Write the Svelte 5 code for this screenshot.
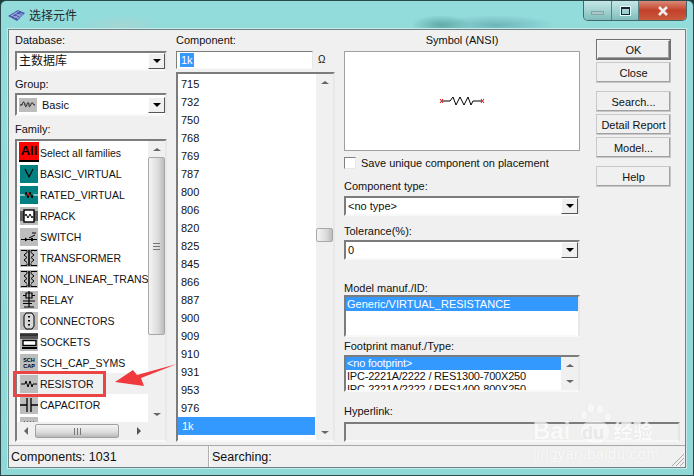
<script>
  const families = [
    { name: "Select all families", icon: "all" },
    { name: "BASIC_VIRTUAL", icon: "basic" },
    { name: "RATED_VIRTUAL", icon: "rated" },
    { name: "RPACK", icon: "rpack" },
    { name: "SWITCH", icon: "switch" },
    { name: "TRANSFORMER", icon: "transformer" },
    { name: "NON_LINEAR_TRANSF", icon: "transformer" },
    { name: "RELAY", icon: "relay" },
    { name: "CONNECTORS", icon: "connectors" },
    { name: "SOCKETS", icon: "sockets" },
    { name: "SCH_CAP_SYMS", icon: "sch" },
    { name: "RESISTOR", icon: "resistor", active: true },
    { name: "CAPACITOR", icon: "capacitor" },
    { name: "INDUCTOR", icon: "inductor" },
  ];
  const values = ["715","732","750","768","769","787","800","806","820","825","845","866","887","900","909","910","931","953","976","1k","1.02k"];
  const buttons = [["OK", "Close"], ["Search...", "Detail Report", "Model..."], ["Help"]];
</script>

{#snippet arrow(dir)}
  <span class="arrow {dir}"></span>
{/snippet}

{#snippet combo(text, icon)}
  <div class="combo">
    {#if icon}
      <svg class="group-icon" viewBox="0 0 18 14" width="18" height="14">
        <rect width="18" height="14" fill="#bdbdbd" />
        <path d="M1 7h2c1-4 2-4 3 0s2 0 2-1 2-3 2 1 2 0 2-1 2-2 3 1h1" fill="none" stroke="#111" stroke-width="1" />
      </svg>
    {/if}
    <span class="combo-text">{text}</span>
    <span class="combo-btn">{@render arrow("down")}</span>
  </div>
{/snippet}

{#snippet famIcon(kind)}
  {#if kind === "all"}
    <span class="all-icon">All</span>
  {:else}
    <svg class="fam-icon" viewBox="0 0 18 18" width="18" height="18">
      <rect width="18" height="18" fill={kind === "basic" || kind === "rated" ? "#008080" : "#bdbdbd"} />
      <g fill="none" stroke="#000" stroke-width="1">
        {#if kind === "basic"}
          <path d="M5 4l4 8 4-8" stroke-width="1.2" />
        {:else if kind === "rated"}
          <path d="M0 9h5M13 9h5" stroke="#fff" />
          <path d="M5 9l1-3 2 6 2-6 2 6 1-3" />
          <path d="M8 7l2 4" stroke="#e01010" stroke-width="1.4" />
        {:else if kind === "rpack"}
          <rect x="4" y="3" width="10" height="12" fill="#fff" stroke-width="1.4" />
          <path d="M0 5h4M0 7h4M0 9h4M0 11h4M0 13h4M14 5h4M14 7h4M14 9h4M14 11h4M14 13h4" stroke-width="1.1" />
          <path d="M5 9l1-2 2 4 2-4 2 4 1-2" />
        {:else if kind === "switch"}
          <path d="M1 11.5h16M9 10l6-3M12 5h4" />
          <path d="M5 9.5l3 2-3 2zM11 10h2v3h-2z" fill="#000" stroke="none" />
        {:else if kind === "transformer"}
          <path d="M1 1.5h6v2M1 16.5h6v-2M17 1.5h-6v2M17 16.5h-6v-2" />
          <path d="M7 3.5L4 6l3 2.5L4 11l3 2.5M11 3.5L14 6l-3 2.5 3 2.5-3 2.5" />
          <path d="M8.5 1v16M9.5 1v16" stroke-width=".8" />
        {:else if kind === "relay"}
          <path d="M6 2h6v5H6zM3 4.5h3M12 4.5h3M3 10h12M3 12.5h9M9 0v16M4 16h10" stroke-width="1.2" />
        {:else if kind === "connectors"}
          <path d="M6 1h6l2 3v10l-2 3H6l-2-3V4z" fill="#d8d8d8" />
          <path d="M9 4v1.5M9 8v1.5M9 12v1.5" stroke-width="2" />
        {:else if kind === "sockets"}
          <path d="M1 0v6M3 0v6M5 0v6M7 0v6M9 0v6M11 0v6M13 0v6M15 0v6M17 0v6" stroke-width="1.1" />
          <path d="M0 2h18" stroke="#000" stroke-width=".8" />
          <rect x="3" y="7.5" width="13" height="5" fill="#fff" stroke-width="1.4" />
          <path d="M2 15h15" stroke-width="2" />
        {:else if kind === "sch"}
          <text class="tiny" x="9" y="8" text-anchor="middle">SCH</text>
          <text class="tiny" x="9" y="14" text-anchor="middle">CAP</text>
        {:else if kind === "resistor"}
          <path d="M1 9h4l1-3 2 6 2-6 2 6 1-3h4" />
        {:else if kind === "capacitor"}
          <path d="M0 9h7M11 9h7M7 2v14M11 2v14" stroke-width="1.3" />
        {:else}
          <path d="M0 8h3c0-4 3-4 3 0 0-4 3-4 3 0 0-4 3-4 3 0 0-4 3-4 3 0h3" />
        {/if}
      </g>
    </svg>
  {/if}
{/snippet}

<div class="window">
  <header class="titlebar">
    <svg class="app-icon" viewBox="0 0 17 11" width="17" height="11">
      <path d="M0 6l10-6 7 3-8 8z" fill="#4c5ba8" />
      <path d="M3 6l8-5M6 8l8-5M9 9l6-5M3 5l7 3M6 3l7 3" stroke="#b9c4f0" stroke-width=".7" fill="none" />
    </svg>
    <span class="title">选择元件</span>
    <div class="win-btns">
      <span class="wb min"><i></i></span>
      <span class="wb max"><i></i></span>
      <span class="wb close">
        <svg viewBox="0 0 12 10" width="12" height="10"><path d="M2 1l8 8M10 1L2 9" stroke="#eee" stroke-width="2.6" /></svg>
      </span>
    </div>
  </header>

  <div class="client">
    <div class="main">
      <section class="col-left">
        <label class="lbl first">Database:</label>
        {@render combo("主数据库")}
        <label class="lbl group-lbl">Group:</label>
        {@render combo("Basic", true)}
        <label class="lbl family-lbl">Family:</label>
        <div class="family-box sunken">
          <div class="family-top">
            <ul class="family-list">
              {#each families as f}
                <li class:active={f.active}>
                  {@render famIcon(f.icon)}
                  <span class="fam-name">{f.name}</span>
                </li>
              {/each}
            </ul>
            <div class="vscroll">
              <span class="sb-arrow">{@render arrow("up-gray")}</span>
              <div class="track fam-track">
                <div class="thumb fam-thumb"><span class="grip"></span></div>
              </div>
              <span class="sb-arrow">{@render arrow("down-gray")}</span>
            </div>
          </div>
          <div class="hscroll">
            <span class="h-arrow">{@render arrow("left")}</span>
            <div class="hthumb"><span class="hgrip"></span></div>
            <span class="h-arrow">{@render arrow("right")}</span>
          </div>
        </div>
      </section>

      <section class="col-mid">
        <label class="lbl first">Component:</label>
        <div class="search-row">
          <div class="search-input"><span class="sel-text">1k</span></div>
          <span class="ohm">Ω</span>
        </div>
        <div class="value-box sunken">
          <ul class="value-list">
            {#each values as v}
              <li class:selected={v === "1k"}>{v}</li>
            {/each}
          </ul>
          <div class="vscroll">
            <span class="sb-arrow">{@render arrow("up-gray")}</span>
            <div class="track val-track"><div class="thumb val-thumb"></div></div>
            <span class="sb-arrow">{@render arrow("down-gray")}</span>
          </div>
        </div>
      </section>

      <section class="col-right">
        <div class="right-top">
          <div class="form">
            <div class="lbl first center">Symbol (ANSI)</div>
            <div class="symbol">
              <svg viewBox="0 0 46 10" width="46" height="10">
                <path d="M3 5h8l3-4 3 8 4-8 4 8 4-8 3 8 2-4h9" fill="none" stroke="#000" stroke-width="1" />
                <path d="M1 3l3 4M4 3L1 7M42 3l3 4M45 3l-3 4" stroke="#e01010" stroke-width="1" />
              </svg>
            </div>
            <div class="check-row"><span class="check"></span><span>Save unique component on placement</span></div>
            <label class="lbl type-lbl">Component type:</label>
            {@render combo("<no type>")}
            <label class="lbl tol-lbl">Tolerance(%):</label>
            {@render combo("0")}
            <label class="lbl model-lbl">Model manuf./ID:</label>
            <div class="model-box sunken"><div class="row-sel">Generic/VIRTUAL_RESISTANCE</div></div>
            <label class="lbl foot-lbl">Footprint manuf./Type:</label>
            <div class="foot-box sunken">
              <ul class="foot-list">
                <li class="row-sel">&lt;no footprint&gt;</li>
                <li>IPC-2221A/2222 / RES1300-700X250</li>
                <li>IPC-2221A/2222 / RES1400-800X250</li>
              </ul>
              <div class="foot-scroll">
                {@render arrow("up-gray")}
                {@render arrow("down-gray")}
              </div>
            </div>
          </div>
          <div class="buttons">
            {#each buttons as group}
              <div class="btn-group">
                {#each group as b}
                  <button type="button" class:default={b === "OK"}>{b}</button>
                {/each}
              </div>
            {/each}
          </div>
        </div>
        <label class="lbl link-lbl">Hyperlink:</label>
        <div class="link-box"></div>
      </section>
    </div>

    <footer class="status">
      <div class="st st-left">Components: 1031</div>
      <div class="st st-right">Searching:</div>
      <svg class="grip-corner" viewBox="0 0 14 14" width="14" height="14">
        <path d="M13 1L1 13M13 5L5 13M13 9l-4 4" stroke="#a8a8a8" stroke-width="1" />
      </svg>
    </footer>

    <!-- annotation drawn on top of the screenshot -->
    <div class="red-box"></div>
    <svg class="red-arrow" viewBox="0 0 64 24" width="64" height="24">
      <path d="M63 0L27 14l3 8-29-4L19 6l4 5z" fill="#f0393c" />
    </svg>
    <div class="watermark">
      <svg class="paw" viewBox="0 0 34 44" width="34" height="44">
        <g fill="#fff" stroke="#e0e0e0" stroke-width=".6">
          <ellipse cx="5" cy="12" rx="3.6" ry="4.6" />
          <ellipse cx="12" cy="5" rx="3.8" ry="5" />
          <ellipse cx="21" cy="6" rx="3.8" ry="5" />
          <ellipse cx="29" cy="14" rx="3.6" ry="4.6" />
          <ellipse cx="16" cy="29" rx="15" ry="12" />
        </g>
      </svg>
      <div class="wm-main">
        <span class="wm-bai">Bai</span><span class="wm-du">du</span><span class="wm-cn">经验</span>
      </div>
      <div class="wm-sub">jingyan.baidu.com</div>
    </div>
  </div>
</div>

<style>
  :global(body) {
    margin: 0;
    background: #1a3a3c;
  }
  ul {
    list-style: none;
    margin: 0;
    padding: 0;
  }
  .window {
    box-sizing: border-box;
    width: 694px;
    height: 476px;
    display: flex;
    flex-direction: column;
    padding: 0 7px 7px 7px;
    font-family: "Liberation Sans", "Noto Sans CJK SC", sans-serif;
    font-size: 11px;
    line-height: 14px;
    color: #111;
    border: 1px solid #2c4a4c;
    border-radius: 6px 6px 0 0;
    overflow: hidden;
    background:
      radial-gradient(ellipse 30px 10px at 440px 24px, #5fa9a8, transparent),
      radial-gradient(ellipse 60px 10px at 495px 24px, #6eb5b8, transparent),
      radial-gradient(ellipse 40px 10px at 120px 24px, #a3d6d2, transparent),
      linear-gradient(#93dcdc, #8ed8d8);
  }
  .titlebar {
    flex: none;
    height: 28px;
    display: flex;
    align-items: center;
    position: relative;
  }
  .app-icon {
    margin: 0 4px 0 0;
    flex: none;
  }
  .title {
    font-size: 12px;
    color: #1c2a2c;
    margin-top: 1px;
  }
  .win-btns {
    margin-left: auto;
    align-self: flex-start;
    margin-right: -1px;
    display: flex;
    height: 19px;
    border: 1px solid #44676a;
    border-top: 0;
    border-radius: 0 0 5px 5px;
    overflow: hidden;
  }
  .wb {
    display: flex;
    align-items: center;
    justify-content: center;
    height: 100%;
    border-right: 1px solid #5b7f82;
    background: linear-gradient(#c4e6e6, #a4d2d2 50%, #7fbcbc);
  }
  .min { width: 27px; }
  .min i {
    width: 11px;
    height: 2px;
    margin-top: 4px;
    background: #a9c8c8;
    border: 1px solid #84a4a4;
  }
  .max { width: 26px; }
  .max i {
    width: 7px;
    height: 5px;
    border: 1px solid #223;
    border-top-width: 2px;
    outline: 1px solid #dff;
  }
  .close {
    width: 47px;
    border: 0;
    background: linear-gradient(#d88a78, #c4412a 50%, #c85a3c);
  }
  .client {
    flex: 1;
    min-height: 0;
    position: relative;
    display: flex;
    flex-direction: column;
    background: #f0f0f0;
    border: 1px solid #6b8486;
    box-shadow: 0 0 0 1px #c8e8e8;
  }
  .main {
    flex: 1;
    min-height: 0;
    display: flex;
    padding: 0 5px 3px 6px;
    gap: 9px;
  }
  section {
    display: flex;
    flex-direction: column;
    min-height: 0;
  }
  .col-left { width: 152px; flex: none; }
  .col-mid { width: 159px; flex: none; }
  .col-right { flex: 1; min-width: 0; }
  .lbl {
    display: block;
    height: 14px;
  }
  .first { margin-top: 3px; margin-bottom: 4px; }
  .center { text-align: center; }
  .combo {
    box-sizing: border-box;
    height: 20px;
    flex: none;
    display: flex;
    align-items: center;
    background: #fff;
    border: 2px solid;
    border-color: #7c7c7c #e8e8e8 #f8f8f8 #7c7c7c;
  }
  .col-left .combo:nth-of-type(1) { font-size: 12px; }
  .combo-text {
    flex: 1;
    padding-left: 2px;
  }
  .group-icon { margin-left: 2px; margin-right: 3px; }
  .combo-btn {
    width: 17px;
    height: 16px;
    box-sizing: border-box;
    display: flex;
    align-items: center;
    justify-content: center;
    background: #f0f0f0;
    border: 1px solid;
    border-color: #fff #555 #555 #fff;
  }
  .arrow {
    display: block;
    width: 0;
    height: 0;
    border-style: solid;
    border-color: transparent;
  }
  .down { border-width: 4px 4px 0; border-top-color: #000; }
  .down-gray { border-width: 3px 4px 0; border-top-color: #666; }
  .up-gray { border-width: 0 4px 3px; border-bottom-color: #666; }
  .left { border-width: 4px 4px 4px 0; border-right-color: #666; }
  .right { border-width: 4px 0 4px 4px; border-left-color: #555; }

  .group-lbl { margin-top: 6px; margin-bottom: 2px; }
  .col-left .combo:nth-of-type(2) { height: 23px; }
  .family-lbl { margin-top: 6px; margin-bottom: 3px; }
  .sunken {
    box-sizing: border-box;
    background: #fff;
    border: 2px solid;
    border-color: #7c7c7c #e8e8e8 #f8f8f8 #7c7c7c;
  }
  .family-box {
    flex: 1;
    min-height: 0;
    display: flex;
    flex-direction: column;
  }
  .family-top {
    flex: 1;
    min-height: 0;
    display: flex;
  }
  .family-list {
    flex: 1;
    min-width: 0;
    overflow: hidden;
    padding-top: 1px;
    font-size: 10.5px;
  }
  .family-list li {
    height: 21px;
    display: flex;
    align-items: center;
    white-space: nowrap;
    overflow: hidden;
    padding-left: 3px;
  }
  .family-list li.active { background: #f0f0f0; }
  .fam-icon, .all-icon { flex: none; }
  .all-icon {
    box-sizing: border-box;
    width: 20px;
    height: 20px;
    margin-top: -1px;
    margin-left: -1px;
    margin-right: -1px;
    background: #ff0000;
    border-bottom: 2px solid #000;
    color: #000;
    font: bold 13px/17px "Liberation Sans", sans-serif;
    text-align: center;
  }
  .tiny {
    font: bold 5.5px "Liberation Sans", sans-serif;
    fill: #000;
    stroke: none;
  }
  .fam-name { margin-left: 2px; }
  .vscroll {
    width: 17px;
    flex: none;
    display: flex;
    flex-direction: column;
    background: #f0f0f0;
  }
  .sb-arrow {
    height: 16px;
    flex: none;
    display: flex;
    align-items: center;
    justify-content: center;
  }
  .track { flex: 1; min-height: 0; }
  .thumb {
    box-sizing: border-box;
    border: 1px solid #a8a8a8;
    border-radius: 2px;
    background: linear-gradient(90deg, #f4f4f4, #dcdcdc 60%, #bcbcbc);
  }
  .fam-thumb {
    height: 178px;
    display: flex;
    align-items: center;
    justify-content: center;
  }
  .grip {
    width: 7px;
    height: 7px;
    background: repeating-linear-gradient(#777 0 1px, transparent 1px 3px);
  }
  .val-track { padding-top: 138px; }
  .val-thumb { height: 14px; }
  .hscroll {
    height: 18px;
    flex: none;
    display: flex;
    align-items: center;
    background: #f0f0f0;
    padding-right: 17px;
  }
  .h-arrow {
    width: 18px;
    flex: none;
    display: flex;
    justify-content: center;
  }
  .hthumb {
    width: 84px;
    margin-right: auto;
    height: 14px;
    box-sizing: border-box;
    border: 1px solid #a0a0a0;
    border-radius: 2px;
    background: linear-gradient(#f4f4f4, #dcdcdc 60%, #b8b8b8);
    display: flex;
    align-items: center;
    justify-content: center;
  }
  .hgrip {
    width: 7px;
    height: 7px;
    background: repeating-linear-gradient(90deg, #777 0 1px, transparent 1px 3px);
  }

  .search-row {
    display: flex;
    align-items: center;
    height: 18px;
    margin-bottom: 3px;
    flex: none;
  }
  .search-input {
    box-sizing: border-box;
    width: 137px;
    height: 18px;
    background: #fff;
    border: 1px solid;
    border-color: #7c7c7c #e8e8e8 #f8f8f8 #7c7c7c;
    padding: 1px 3px;
    line-height: 14px;
  }
  .sel-text {
    display: inline-block;
    background: #3399ff;
    color: #fff;
    padding: 0 1px;
  }
  .ohm {
    margin-left: 5px;
    font-size: 10px;
  }
  .value-box {
    flex: 1;
    min-height: 0;
    display: flex;
  }
  .value-list {
    flex: 1;
    min-width: 0;
    overflow: hidden;
    padding-top: 1px;
  }
  .value-list li {
    height: 18px;
    line-height: 18px;
    padding-left: 3px;
    margin-right: 1px;
  }
  .value-list li.selected {
    background: #3399ff;
    color: #fff;
    padding-left: 4px;
  }

  .right-top {
    flex: none;
    display: flex;
    gap: 16px;
  }
  .form {
    width: 236px;
    flex: none;
    display: flex;
    flex-direction: column;
  }
  .symbol {
    box-sizing: border-box;
    height: 100px;
    background: #fff;
    border: 1px solid #a0a0a0;
    display: flex;
    align-items: center;
    justify-content: center;
  }
  .check-row {
    display: flex;
    align-items: center;
    gap: 5px;
    height: 14px;
    margin-top: 5px;
  }
  .check {
    box-sizing: border-box;
    width: 12px;
    height: 12px;
    background: #fff;
    border: 1px solid;
    border-color: #808080 #e8e8e8 #e8e8e8 #808080;
  }
  .type-lbl { margin-top: 9px; margin-bottom: 3px; }
  .tol-lbl { margin-top: 8px; margin-bottom: 2px; }
  .model-lbl { margin-top: 21px; margin-bottom: 0; }
  .model-box { height: 42px; }
  .row-sel {
    background: #3399ff;
    color: #fff;
    height: 14px;
    padding-left: 1px;
  }
  .foot-lbl { margin-top: 2px; margin-bottom: 2px; }
  .foot-box {
    height: 37px;
    display: flex;
    overflow: hidden;
  }
  .foot-list {
    flex: 1;
    min-width: 0;
    white-space: nowrap;
    overflow: hidden;
    letter-spacing: -.2px;
  }
  .foot-list li {
    height: 13px;
    line-height: 13px;
    padding-left: 1px;
  }
  .foot-scroll {
    width: 17px;
    flex: none;
    background: #f0f0f0;
    display: flex;
    flex-direction: column;
    align-items: center;
    justify-content: space-around;
  }
  .buttons {
    width: 75px;
    flex: none;
    margin-top: 9px;
    display: flex;
    flex-direction: column;
    gap: 8px;
  }
  .btn-group {
    display: flex;
    flex-direction: column;
    gap: 2px;
  }
  button {
    box-sizing: border-box;
    width: 75px;
    height: 21px;
    padding: 0;
    font: inherit;
    color: #111;
    background: #f0f0f0;
    border: 1px solid;
    border-color: #fff #808080 #808080 #fff;
    box-shadow: inset -1px -1px 0 #a0a0a0;
    outline: 1px solid #c8c8c8;
    outline-offset: -1px;
  }
  button.default {
    border: 2px solid;
    border-color: #f8f8f8 #707070 #707070 #f8f8f8;
    outline: 1px solid #707070;
    outline-offset: -1px;
  }
  .link-lbl { margin-top: 12px; margin-bottom: 4px; }
  .link-box {
    box-sizing: border-box;
    height: 21px;
    border: 2px solid;
    border-color: #7c7c7c #e4e4e4 #f8f8f8 #7c7c7c;
    background: #f0f0f0;
  }
  .status {
    flex: none;
    height: 22px;
    display: flex;
    position: relative;
    border-top: 1px solid #a8a8a8;
    box-sizing: border-box;
    font-size: 12.5px;
  }
  .st {
    padding: 3px 0 0 2px;
    line-height: 16px;
  }
  .st-left {
    width: 197px;
    border-right: 1px solid #b0b0b0;
  }
  .st-right { flex: 1; padding-left: 2px; border-left: 1px solid #fff; }
  .grip-corner {
    position: absolute;
    right: 0;
    bottom: 0;
  }
  .red-box {
    position: absolute;
    left: 4px;
    top: 341px;
    box-sizing: border-box;
    width: 93px;
    height: 26px;
    border: 3px solid #ea4444;
    pointer-events: none;
  }
  .red-arrow {
    position: absolute;
    left: 105px;
    top: 334px;
  }
  .watermark {
    position: absolute;
    left: 524px;
    top: 391px;
    width: 125px;
    color: #fff;
    pointer-events: none;
    opacity: .7;
  }
  .paw {
    position: absolute;
    left: 46px;
    top: -18px;
    opacity: .75;
  }
  .wm-main {
    position: relative;
    display: flex;
    align-items: baseline;
    white-space: nowrap;
    height: 20px;
    line-height: 20px;
  }
  .wm-bai {
    font: bold 24px/20px "Liberation Sans", sans-serif;
    width: 49px;
    text-shadow: 0 0 1px #d4d4d4;
  }
  .wm-du {
    font: bold 18px/20px "Liberation Sans", sans-serif;
    color: #e6e6e6;
    width: 31px;
  }
  .wm-cn {
    font: bold 20px/20px "Noto Sans CJK SC", sans-serif;
    text-shadow: 0 0 1px #d4d4d4;
  }
  .wm-sub {
    position: relative;
    margin-top: 6px;
    font: 15px/14px "Liberation Sans", sans-serif;
    letter-spacing: .3px;
    text-shadow: 0 0 1px #d4d4d4;
    white-space: nowrap;
  }
</style>
